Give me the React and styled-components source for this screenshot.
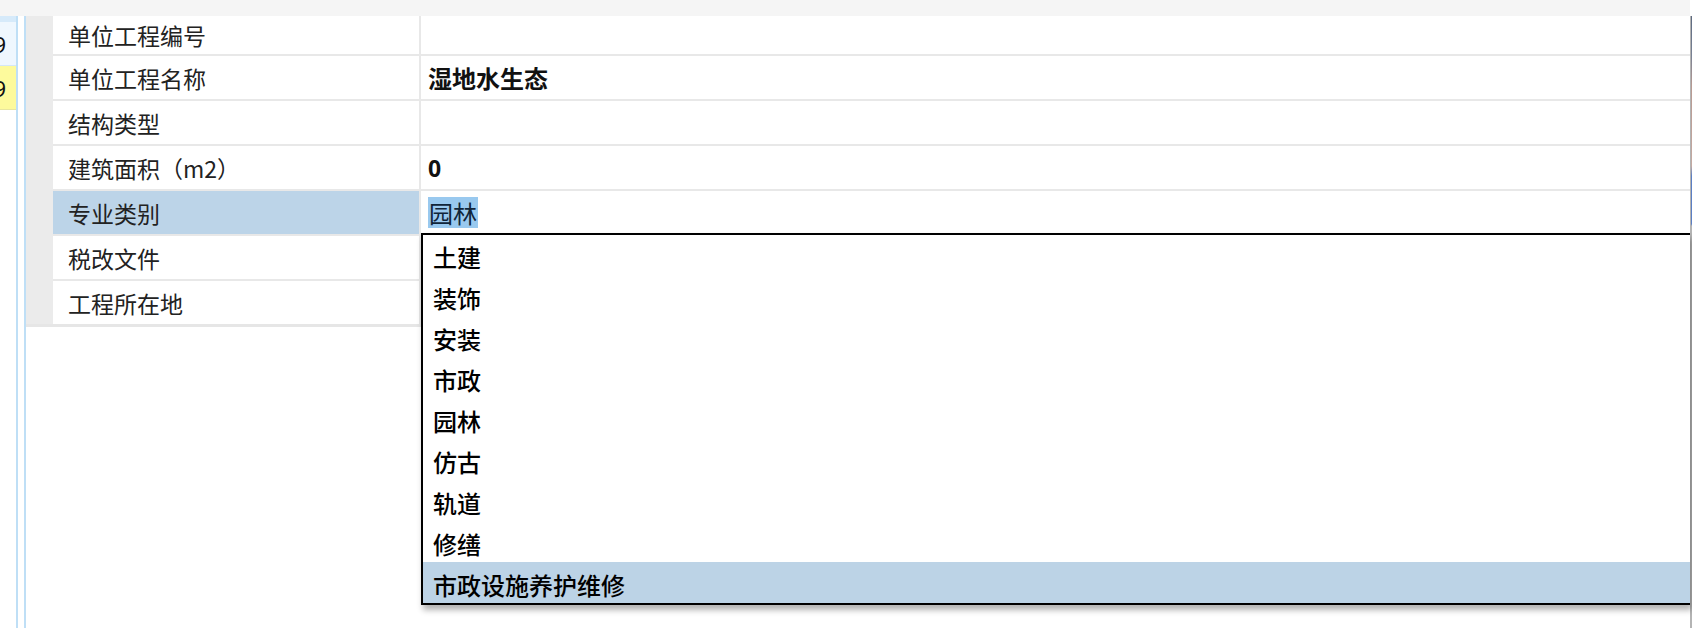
import React from 'react'
import styled, { createGlobalStyle } from 'styled-components'

const GlobalStyle = createGlobalStyle`
  html, body {
    margin: 0;
    padding: 0;
    background: #ffffff;
  }
  body {
    font-family: "Noto Sans CJK SC", "Noto Sans", sans-serif;
    color: #1a1a1a;
  }
`

const rows = [
  { label: '单位工程编号', value: '', first: true },
  { label: '单位工程名称', value: '湿地水生态' },
  { label: '结构类型', value: '' },
  { label: '建筑面积（m2）', value: '0', numeric: true },
  { label: '专业类别', value: '园林', selected: true },
  { label: '税改文件', value: '' },
  { label: '工程所在地', value: '' },
]

const options = ['土建', '装饰', '安装', '市政', '园林', '仿古', '轨道', '修缮', '市政设施养护维修']

export default function App() {
  return (
    <>
      <GlobalStyle />
      <Page>
        <TopBar />
        <Body>
          <Gutter>
            <GutterHead />
            <GutterCell>9</GutterCell>
            <GutterCell marked>9</GutterCell>
          </Gutter>
          <Rule />
          <Gap />
          <Rule />
          <Main>
            <Table>
              <Stripe />
              <Rows>
                {rows.map((r) => (
                  <Row key={r.label} first={r.first}>
                    <Label selected={r.selected}>{r.label}</Label>
                    <Value numeric={r.numeric}>
                      {r.selected ? <Picked>{r.value}</Picked> : r.value}
                    </Value>
                  </Row>
                ))}
              </Rows>
            </Table>
            <Dropdown>
              {options.map((o, i) => (
                <Option key={o} active={i === options.length - 1}>{o}</Option>
              ))}
            </Dropdown>
          </Main>
          <Edge />
        </Body>
      </Page>
    </>
  )
}

const Page = styled.div`
  width: 1692px;
  height: 628px;
  display: flex;
  flex-direction: column;
  overflow: hidden;
  background: #fff;
`

const TopBar = styled.div`
  height: 16px;
  flex: none;
  background: #f5f5f5;
  margin-right: 2px;
`

const Body = styled.div`
  flex: 1;
  display: flex;
  min-height: 0;
`

const Gutter = styled.div`
  width: 16px;
  flex: none;
  display: flex;
  flex-direction: column;
  overflow: hidden;
`

const GutterHead = styled.div`
  height: 6px;
  background: #d6eafa;
`

const GutterCell = styled.div`
  height: 44px;
  flex: none;
  display: flex;
  align-items: center;
  justify-content: flex-end;
  padding-right: 10px;
  box-sizing: border-box;
  font-family: "Noto Sans", sans-serif;
  font-size: 22px;
  color: #111;
  background: ${(p) => (p.marked ? '#fdfa9c' : '#eff7fe')};
  border-bottom: 1px solid ${(p) => (p.marked ? '#e8e6a0' : '#d4e7f7')};
`

const Rule = styled.div`
  width: 2px;
  flex: none;
  background: #bfdff6;
`

const Gap = styled.div`
  width: 6px;
  flex: none;
  background: #fff;
`

const Main = styled.div`
  flex: 1;
  position: relative;
  min-width: 0;
`

const Table = styled.div`
  display: flex;
  border-bottom: 3px solid #e6e6e6;
`

const Stripe = styled.div`
  width: 27px;
  flex: none;
  background: #ebebeb;
`

const Rows = styled.div`
  flex: 1;
  display: flex;
  flex-direction: column;
`

const Row = styled.div`
  display: flex;
  height: ${(p) => (p.first ? '38px' : '43px')};
  border-top: ${(p) => (p.first ? 'none' : '2px solid #e8e8e8')};
`

const Label = styled.div`
  width: 368px;
  flex: none;
  display: flex;
  align-items: center;
  padding-left: 15px;
  box-sizing: border-box;
  font-size: 23px;
  color: #222;
  background: ${(p) => (p.selected ? '#bcd4e8' : '#fff')};
  border-right: 2px solid #e8e8e8;
`

const Value = styled.div`
  flex: 1;
  display: flex;
  align-items: center;
  padding-left: 7px;
  font-size: ${(p) => (p.numeric ? '23px' : '24px')};
  font-weight: 700;
  color: #111;
  font-family: ${(p) => (p.numeric ? '"Noto Sans", sans-serif' : '"Noto Sans CJK SC", sans-serif')};
`

const Picked = styled.span`
  background: #99c9ef;
  font-weight: 400;
  color: #10253a;
  padding: 0 1px;
  line-height: 31px;
`

const Dropdown = styled.div`
  position: absolute;
  left: 395px;
  top: 217px;
  right: 0;
  background: #fff;
  border: 2px solid #000;
  border-right: none;
  box-shadow: 2px 5px 6px rgba(0, 0, 0, 0.3);
  display: flex;
  flex-direction: column;
`

const Option = styled.div`
  height: 40.9px;
  display: flex;
  align-items: center;
  padding-left: 10px;
  padding-top: 3px;
  box-sizing: border-box;
  font-size: 24px;
  font-weight: 500;
  color: #000;
  background: ${(p) => (p.active ? '#bcd3e6' : '#fff')};
`

const Edge = styled.div`
  width: 2px;
  flex: none;
  border-left: 1px solid #b4b4b4;
  background: linear-gradient(
    to bottom,
    #5d6a80 0px,
    #7a8294 40px,
    #b79a92 70px,
    #c4aaa2 150px,
    #5b7fc4 160px,
    #5b7fc4 208px,
    #b4b4b4 210px
  );
  box-sizing: border-box;
`
